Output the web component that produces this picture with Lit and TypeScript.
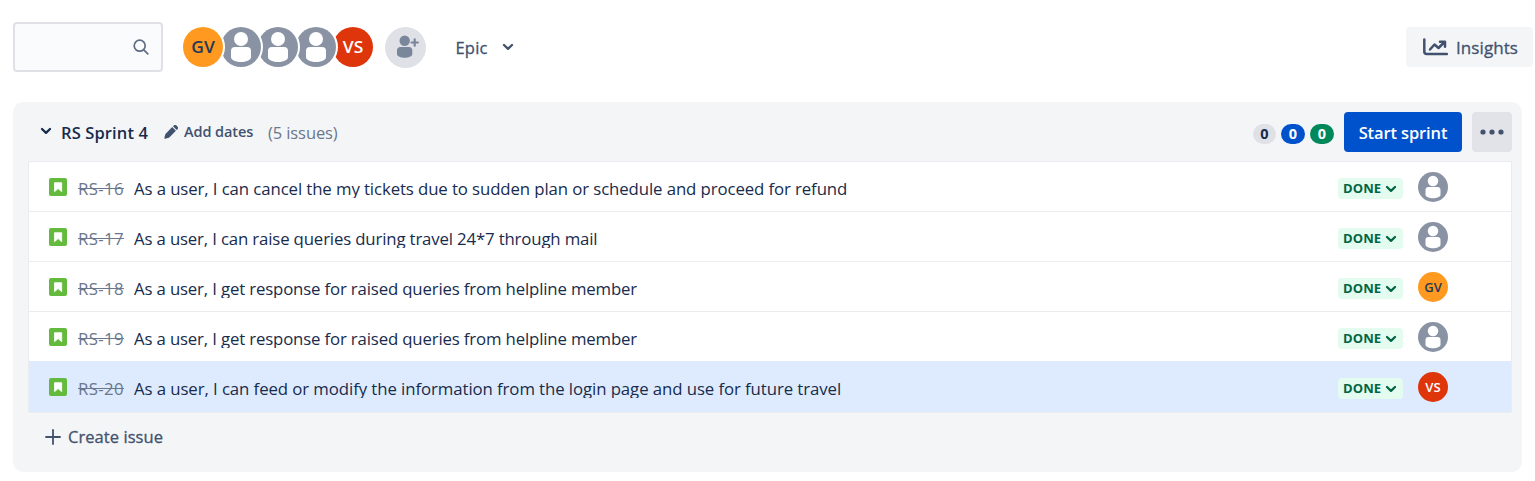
import { LitElement, html, svg, css, nothing } from "lit";
import { customElement, property, state } from "lit/decorators.js";
import { classMap } from "lit/directives/class-map.js";

type Person = "GV" | "VS" | "";

interface Issue {
  key: string;
  title: string;
  assignee: Person;
  spacing: string;
}

const issues: Issue[] = [
  { key: "RS-16", title: "As a user, I can cancel the my tickets due to sudden plan or schedule and proceed for refund", assignee: "", spacing: "normal" },
  { key: "RS-17", title: "As a user, I can raise queries during travel 24*7 through mail", assignee: "", spacing: "tight" },
  { key: "RS-18", title: "As a user, I get response for raised queries from helpline member", assignee: "GV", spacing: "tight" },
  { key: "RS-19", title: "As a user, I get response for raised queries from helpline member", assignee: "", spacing: "tight" },
  { key: "RS-20", title: "As a user, I can feed or modify the information from the login page and use for future travel", assignee: "VS", spacing: "loose" },
];

const chevron = html`<svg class="chevron" width="12" height="8" viewBox="0 0 12 8">
  <path d="M2 2l4 3.800L10 2" fill="none" stroke="currentColor" stroke-width="2.300" stroke-linecap="round" stroke-linejoin="round" />
</svg>`;

@customElement("user-avatar")
export class UserAvatar extends LitElement {
  @property() person: Person = "";
  @property({ type: Number }) size = 40;

  static styles = css`
    :host { display: block; flex: none; }
    svg { display: block; }
    text { font-family: "Open Sans", "Noto Sans", sans-serif; font-weight: 600; }
  `;

  render() {
    const fill = this.person === "GV" ? "#ff991f" : this.person === "VS" ? "#de350b" : "#8993a4";
    const ink = this.person === "GV" ? "#253858" : "#ffffff";
    return html`<svg width=${this.size} height=${this.size} viewBox="0 0 40 40">
      <circle cx="20" cy="20" r="20" fill=${fill} />
      ${this.person
        ? svg`<text x="20" y="26" font-size="17" text-anchor="middle" textLength=${this.person === "GV" ? 23.5 : 20.5} lengthAdjust="spacingAndGlyphs" fill=${ink}>${this.person}</text>`
        : svg`<circle cx="20" cy="12" r="7" fill="#fff" />
            <path d="M10 24a4 4 0 0 1 4-4h12a4 4 0 0 1 4 4v6c0 3.400-5.400 5-10 5s-10-1.600-10-5z" fill="#fff" />`}
    </svg>`;
  }
}

@customElement("app-root")
export class AppRoot extends LitElement {
  @state() private open = true;
  @state() private selected = "RS-20";

  static styles = css`
    :host {
      display: block;
      box-sizing: border-box;
      width: 1535px;
      height: 481px;
      overflow: hidden;
      background: #fff;
      color: #172b4d;
      font-family: "Open Sans", "Noto Sans", sans-serif;
      font-size: 16.5px;
      line-height: 20px;
      white-space: nowrap;
    }
    *, *::before { box-sizing: border-box; }
    svg { display: block; flex: none; }
    button { font: inherit; color: inherit; border: 0; padding: 0; background: none; display: flex; align-items: center; }
    .toolbar { display: flex; align-items: center; height: 50px; margin: 22px 2px 0 13px; }
    .search {
      display: flex; align-items: center; justify-content: flex-end;
      width: 150px; height: 50px; padding-right: 12px;
      border: 2px solid #dfe1e6; border-radius: 4px; background: #fafbfc; color: #5e6c84;
    }
    .team { display: flex; margin-left: 18px; }
    .member { width: 37.5px; border-radius: 50%; position: relative; }
    .member user-avatar { width: 44px; border: 2px solid #fff; border-radius: 50%; background: #fff; }
    .add { width: 41px; height: 41px; margin: 1px 0 0 16.5px; }
    .medium { -webkit-text-stroke: 0.3px currentColor; }
    .toolbar .medium { padding-top: 1px; }
    .epic { margin-left: 29.5px; color: #42526e; gap: 14px; letter-spacing: 0.2px; }
    .insights { margin-left: auto; width: 127px; height: 40px; padding-left: 17px; gap: 8px; border-radius: 4px; background: #f4f5f7; color: #42526e; font-size: 17px; letter-spacing: 0.08px; }
    .sprint { width: 1509px; height: 370px; margin: 30px 0 0 13px; padding: 10px 10px 0 15px; border-radius: 10px; background: #f4f5f7; }
    .head { display: flex; align-items: center; height: 49px; padding-bottom: 9px; }
    .toggle { width: 12px; margin: 0 9px 3px 12px; }
    .name { width: 87px; font-weight: 600; padding-top: 1px; letter-spacing: 0.12px; }
    .dates { margin-left: 16px; width: 89px; gap: 6px; color: #42526e; font-size: 14.5px; font-weight: 600; letter-spacing: -0.1px; }
    .count { margin-left: 15px; color: #6b778c; padding-top: 1px; letter-spacing: -0.1px; }
    .pills { display: flex; gap: 5px; margin: 4px 10px 0 auto; }
    .pill { width: 24px; height: 20px; border-radius: 10px; text-align: center; font-size: 14.5px; font-weight: 700; line-height: 20px; color: #fff; }
    .todo { width: 23px; background: #dfe1e6; color: #172b4d; }
    .doing { background: #0052cc; }
    .finished { background: #00875a; }
    .start { width: 118px; height: 40px; padding-top: 1px; justify-content: center; border-radius: 4px; background: #0052cc; color: #fff; font-weight: 600; letter-spacing: -0.12px; }
    .more { width: 40px; height: 40px; margin-left: 10px; justify-content: center; border-radius: 4px; background: #e2e3e9; color: #42526e; }
    .list { border: 1px solid #ebecf0; border-top: 0; background: #fff; }
    .row { display: flex; height: 50px; border-top: 1px solid #ebecf0; padding-left: 20px; font-size: 16.8px; }
    .row:last-child { height: 51px; }
    .selected { background: #deebff; border-top-color: #deebff; }
    .type { margin-top: 16px; }
    .key { width: 46px; margin: 17px 10px 0 11px; height: 20px; color: #6b778c; text-decoration: line-through; letter-spacing: 0.36px; }
    .title { margin-top: 17px; height: 19px; overflow: hidden; }
    .normal { letter-spacing: -0.1px; }
    .tight { letter-spacing: -0.155px; }
    .loose { letter-spacing: -0.082px; }
    .status { margin: 16px 15px 0 auto; width: 65px; height: 21px; padding: 0 6px 0 5px; justify-content: space-between; border-radius: 4px; background: #e3fcef; color: #006644; font-size: 13px; font-weight: 700; letter-spacing: 0.1px; }
    .status span { padding-bottom: 1px; }
    .owner { margin: 10px 63px 0 0; }
    .create { margin: 14px 0 0 17px; gap: 7px; height: 20px; color: #42526e; letter-spacing: 0.06px; }
  `;

  private row(issue: Issue) {
    return html`<div class=${classMap({ row: true, selected: this.selected === issue.key })} @click=${() => (this.selected = issue.key)}>
      <svg class="type" width="18" height="18" viewBox="0 0 18 18">
        <rect width="18" height="18" rx="2" fill="#63ba3c" />
        <path d="M5.500 4.700h7.200v9l-3.600-3.100-3.600 3.100z" fill="#fff" stroke="#fff" stroke-width=".8" stroke-linejoin="round" />
      </svg>
      <span class="key">${issue.key}</span>
      <span class="title ${issue.spacing}">${issue.title}</span>
      <button class="status"><span>DONE</span>${chevron}</button>
      <user-avatar class="owner" .person=${issue.assignee} .size=${30}></user-avatar>
    </div>`;
  }

  render() {
    const team: Person[] = ["GV", "", "", "", "VS"];
    return html`
      <div class="toolbar">
        <div class="search">
          <svg width="16" height="16" viewBox="0 0 16 16" fill="none" stroke="currentColor" stroke-width="1.700" stroke-linecap="round">
            <circle cx="6.700" cy="6.700" r="5.500" /><path d="M10.800 10.800l4 4" />
          </svg>
        </div>
        <div class="team">
          ${team.map((p, i) => html`<div class="member" style="z-index:${team.length - i}"><user-avatar .person=${p}></user-avatar></div>`)}
        </div>
        <svg class="add" viewBox="0 0 41 41">
          <circle cx="20.500" cy="20.500" r="20.500" fill="#dfe1e6" />
          <g fill="#7a869a"><circle cx="19.700" cy="13.700" r="5.200" />
            <path d="M12 23.500a3.500 3.500 0 0 1 3.500-3.500h8.300a3.500 3.500 0 0 1 3.500 3.500v3.500c0 2.600-4 3.700-7.650 3.700s-7.650-1.100-7.650-3.700z" /></g>
          <path d="M29.700 12.300v6.400M26.500 15.500h6.400" stroke="#7a869a" stroke-width="2.200" stroke-linecap="round" />
        </svg>
        <button class="epic"><span class="medium">Epic</span>${chevron}</button>
        <button class="insights">
          <svg width="25" height="18" viewBox="0 0 25 18" fill="none" stroke="currentColor" stroke-width="2.500" stroke-linecap="round" stroke-linejoin="round">
            <path d="M1.300 1.500V13.500a2.500 2.500 0 0 0 2.500 2.500H24" />
            <path d="M7 11.500l4.500-5 4 3.500 6-6M17 3.700h5v5" />
          </svg>
          <span class="medium">Insights</span>
        </button>
      </div>
      <div class="sprint">
        <div class="head">
          <button class="toggle" @click=${() => (this.open = !this.open)}>${chevron}</button>
          <span class="name">RS Sprint 4</span>
          <button class="dates">
            <svg width="14" height="14" viewBox="0 0 14 14" fill="currentColor">
              <path d="M8.200 2.100l3.700 3.700-6.600 6.600a1.500 1.500 0 0 1-.7.4l-3.300.9a.7.7 0 0 1-.9-.9l.9-3.300a1.500 1.500 0 0 1 .4-.7zM9 1.300l.7-.7a2 2 0 0 1 2.800 0l.9.900a2 2 0 0 1 0 2.800l-.7.700z" />
            </svg>
            <span>Add dates</span>
          </button>
          <span class="count">(5 issues)</span>
          <div class="pills"><span class="pill todo">0</span><span class="pill doing">0</span><span class="pill finished">0</span></div>
          <button class="start">Start sprint</button>
          <button class="more"><svg width="24" height="6" viewBox="0 0 24 6" fill="currentColor"><circle cx="3" cy="3" r="2.600" /><circle cx="12" cy="3" r="2.600" /><circle cx="21" cy="3" r="2.600" /></svg></button>
        </div>
        ${this.open ? html`<div class="list">${issues.map((i) => this.row(i))}</div>` : nothing}
        <button class="create">
          <svg width="16" height="16" viewBox="0 0 16 16"><path d="M8 1v14M1 8h14" stroke="currentColor" stroke-width="1.800" stroke-linecap="round" /></svg>
          <span class="medium">Create issue</span>
        </button>
      </div>
    `;
  }
}
